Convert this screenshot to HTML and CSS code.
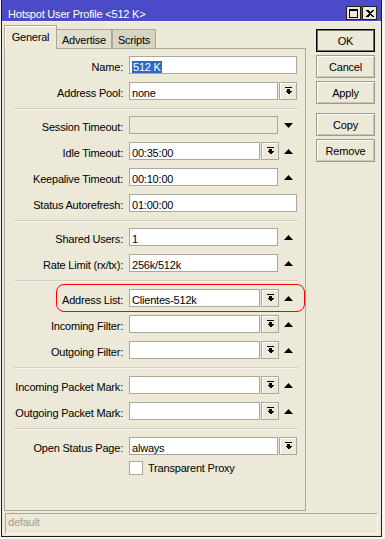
FILE: index.html
```html
<!DOCTYPE html>
<html lang="en">
<head>
    <meta charset="UTF-8">
    <meta name="viewport" content="width=device-width, initial-scale=1.0">
    <title>Hotspot User Profile</title>
    <link rel="stylesheet" href="styles.css">
</head>
<body>
    <div class="window">
        <div class="titlebar">
            <div class="title">Hotspot User Profile &lt;512 K&gt;</div>
            <div class="tbtns">
                <div class="tbtn">
                    <svg width="9" height="9" viewBox="0 0 9 9" shape-rendering="crispEdges"><path d="M0 0h9v2H0zM0 2h1v7H0zM8 2h1v7H8zM0 8h9v1H0z" fill="#000"/></svg>
                </div>
                <div class="tbtn">
                    <svg width="8" height="7" viewBox="0 0 8 7" shape-rendering="crispEdges"><path d="M0 0h2l2 2 2-2h2L5 3.5 8 7H6L4 5 2 7H0l3-3.5z" fill="#000"/></svg>
                </div>
            </div>
        </div>

        <div class="main">
            <div class="left">
                <div class="tabs">
                    <div class="tab on" style="width: 53px;">General</div>
                    <div class="tab" style="width: 55px; border-left: none;">Advertise</div>
                    <div class="tab dark" style="width: 44px;">Scripts</div>
                </div>

                <div class="panel">
                    <div class="row">
                        <div class="label">Name:</div>
                        <div class="field"><div class="edit"><span class="sel">512 K</span></div></div>
                    </div>
                    <div class="row">
                        <div class="label">Address Pool:</div>
                        <div class="field">
                            <div class="edit">none</div>
                            <div class="drop"><svg width="7" height="8" viewBox="0 0 7 8" shape-rendering="crispEdges"><path d="M0 0h7v1H0zM2 2h3v2H2zM0 4h7L3.5 7.5z" fill="#000"/></svg></div>
                        </div>
                    </div>

                    <div class="sep"></div>

                    <div class="row">
                        <div class="label">Session Timeout:</div>
                        <div class="field">
                            <div class="edit off"></div>
                            <div class="arrow"><svg width="9" height="5" viewBox="0 0 9 5"><path d="M0 0h9L4.5 5z" fill="#000"/></svg></div>
                        </div>
                    </div>
                    <div class="row">
                        <div class="label">Idle Timeout:</div>
                        <div class="field">
                            <div class="edit">00:35:00</div>
                            <div class="drop"><svg width="7" height="8" viewBox="0 0 7 8" shape-rendering="crispEdges"><path d="M0 0h7v1H0zM2 2h3v2H2zM0 4h7L3.5 7.5z" fill="#000"/></svg></div>
                            <div class="arrow"><svg width="9" height="5" viewBox="0 0 9 5"><path d="M0 5h9L4.5 0z" fill="#000"/></svg></div>
                        </div>
                    </div>
                    <div class="row">
                        <div class="label">Keepalive Timeout:</div>
                        <div class="field">
                            <div class="edit">00:10:00</div>
                            <div class="arrow"><svg width="9" height="5" viewBox="0 0 9 5"><path d="M0 5h9L4.5 0z" fill="#000"/></svg></div>
                        </div>
                    </div>
                    <div class="row">
                        <div class="label">Status Autorefresh:</div>
                        <div class="field"><div class="edit">01:00:00</div></div>
                    </div>

                    <div class="sep"></div>

                    <div class="row">
                        <div class="label">Shared Users:</div>
                        <div class="field">
                            <div class="edit">1</div>
                            <div class="arrow"><svg width="9" height="5" viewBox="0 0 9 5"><path d="M0 5h9L4.5 0z" fill="#000"/></svg></div>
                        </div>
                    </div>
                    <div class="row">
                        <div class="label">Rate Limit (rx/tx):</div>
                        <div class="field">
                            <div class="edit">256k/512k</div>
                            <div class="arrow"><svg width="9" height="5" viewBox="0 0 9 5"><path d="M0 5h9L4.5 0z" fill="#000"/></svg></div>
                        </div>
                    </div>

                    <div class="sep wide"></div>

                    <div class="row marked">
                        <div class="mark"></div>
                        <div class="label">Address List:</div>
                        <div class="field">
                            <div class="edit">Clientes-512k</div>
                            <div class="drop"><svg width="7" height="8" viewBox="0 0 7 8" shape-rendering="crispEdges"><path d="M0 0h7v1H0zM2 2h3v2H2zM0 4h7L3.5 7.5z" fill="#000"/></svg></div>
                            <div class="arrow"><svg width="9" height="5" viewBox="0 0 9 5"><path d="M0 5h9L4.5 0z" fill="#000"/></svg></div>
                        </div>
                    </div>
                    <div class="row">
                        <div class="label">Incoming Filter:</div>
                        <div class="field">
                            <div class="edit"></div>
                            <div class="drop"><svg width="7" height="8" viewBox="0 0 7 8" shape-rendering="crispEdges"><path d="M0 0h7v1H0zM2 2h3v2H2zM0 4h7L3.5 7.5z" fill="#000"/></svg></div>
                            <div class="arrow"><svg width="9" height="5" viewBox="0 0 9 5"><path d="M0 5h9L4.5 0z" fill="#000"/></svg></div>
                        </div>
                    </div>
                    <div class="row">
                        <div class="label">Outgoing Filter:</div>
                        <div class="field">
                            <div class="edit"></div>
                            <div class="drop"><svg width="7" height="8" viewBox="0 0 7 8" shape-rendering="crispEdges"><path d="M0 0h7v1H0zM2 2h3v2H2zM0 4h7L3.5 7.5z" fill="#000"/></svg></div>
                            <div class="arrow"><svg width="9" height="5" viewBox="0 0 9 5"><path d="M0 5h9L4.5 0z" fill="#000"/></svg></div>
                        </div>
                    </div>

                    <div class="sep wide"></div>

                    <div class="row">
                        <div class="label">Incoming Packet Mark:</div>
                        <div class="field">
                            <div class="edit"></div>
                            <div class="drop"><svg width="7" height="8" viewBox="0 0 7 8" shape-rendering="crispEdges"><path d="M0 0h7v1H0zM2 2h3v2H2zM0 4h7L3.5 7.5z" fill="#000"/></svg></div>
                            <div class="arrow"><svg width="9" height="5" viewBox="0 0 9 5"><path d="M0 5h9L4.5 0z" fill="#000"/></svg></div>
                        </div>
                    </div>
                    <div class="row">
                        <div class="label">Outgoing Packet Mark:</div>
                        <div class="field">
                            <div class="edit"></div>
                            <div class="drop"><svg width="7" height="8" viewBox="0 0 7 8" shape-rendering="crispEdges"><path d="M0 0h7v1H0zM2 2h3v2H2zM0 4h7L3.5 7.5z" fill="#000"/></svg></div>
                            <div class="arrow"><svg width="9" height="5" viewBox="0 0 9 5"><path d="M0 5h9L4.5 0z" fill="#000"/></svg></div>
                        </div>
                    </div>

                    <div class="sep wide"></div>

                    <div class="row">
                        <div class="label">Open Status Page:</div>
                        <div class="field">
                            <div class="edit">always</div>
                            <div class="drop"><svg width="7" height="8" viewBox="0 0 7 8" shape-rendering="crispEdges"><path d="M0 0h7v1H0zM2 2h3v2H2zM0 4h7L3.5 7.5z" fill="#000"/></svg></div>
                        </div>
                    </div>
                    <div class="check">
                        <div class="box"></div>
                        <span>Transparent Proxy</span>
                    </div>
                </div>
            </div>

            <div class="right">
                <div class="btn default">OK</div>
                <div class="btn">Cancel</div>
                <div class="btn">Apply</div>
                <div class="btn gap">Copy</div>
                <div class="btn">Remove</div>
            </div>
        </div>

        <div class="status">default</div>
    </div>
</body>
</html>
```

FILE: styles.css
```css
body {
    margin: 0;
    background-color: #f6f5f0;
    font-family: "Liberation Sans", Arial, sans-serif;
    font-size: 11px;
    letter-spacing: -0.2px;
    color: #000;
}

.window {
    width: 381px;
    height: 537px;
    margin-left: 1px;
    box-sizing: border-box;
    border: 1px solid #1e1e1e;
    border-top: none;
    background-color: #ece9d8;
}

.titlebar {
    height: 21px;
    background-color: #4b4bc9;
    border-bottom: 1px solid #f4f3ee;
    color: #fff;
    display: flex;
    justify-content: space-between;
    padding: 6px 4px 0 6px;
    box-sizing: content-box;
    height: 15px;
}

.title {
    line-height: 14px;
    margin-top: 1px;
    white-space: nowrap;
}

.tbtns {
    display: flex;
    gap: 1px;
}

.tbtn {
    width: 15px;
    height: 14px;
    box-sizing: border-box;
    border: 1px solid #222;
    background-color: #ece9d8;
    display: flex;
    align-items: center;
    justify-content: center;
}

.main {
    display: flex;
    padding: 3px 0 0 2px;
}

.left {
    width: 302px;
}

.tabs {
    display: flex;
    align-items: flex-end;
    height: 23px;
}

.tab {
    height: 19px;
    box-sizing: border-box;
    border: 1px solid #aca899;
    border-bottom: none;
    padding-top: 3px;
    line-height: 14px;
    text-align: center;
    background-color: #e2dfce;
}

.tab.dark {
    background-color: #d7d4c4;
}

.tab.on {
    height: 24px;
    margin-bottom: -1px;
    padding-top: 4px;
    position: relative;
    background-color: #ece9d8;
    box-shadow: inset 1px 1px #fff;
}

.panel {
    height: 463px;
    box-sizing: border-box;
    border: 1px solid #aca899;
    padding-top: 7px;
}

.row {
    display: flex;
    height: 18px;
    margin-bottom: 8px;
}

.label {
    width: 120px;
    box-sizing: border-box;
    padding: 4px 2px 0 0;
    line-height: 14px;
    text-align: right;
    white-space: nowrap;
}

.field {
    display: flex;
    width: 168px;
    margin-left: 4px;
}

.edit {
    flex: 1;
    height: 18px;
    box-sizing: border-box;
    border: 1px solid #aca899;
    background-color: #fff;
    padding: 3px 2px 0;
    line-height: 14px;
    white-space: nowrap;
    overflow: hidden;
}

.edit.off {
    background-color: #ece9d8;
}

.sel {
    background-color: #316ac5;
    color: #fff;
    padding: 0 1px;
}

.drop {
    width: 18px;
    height: 18px;
    margin-left: 1px;
    box-sizing: border-box;
    border: 1px solid #aca899;
    background-color: #ece9d8;
    box-shadow: inset 1px 1px #fff;
    display: flex;
    align-items: center;
    justify-content: center;
}

.arrow {
    width: 18px;
    margin-left: 1px;
    padding-left: 5px;
    box-sizing: border-box;
    display: flex;
    align-items: center;
}

.drop + .arrow {
    margin-left: 0;
}

.sep {
    width: 284px;
    margin: 1px 0 6px 9px;
    border-top: 1px solid #d0cdbc;
    border-bottom: 1px solid #f7f6f0;
}

.sep.wide {
    margin-bottom: 7px;
}

.marked {
    position: relative;
}

.mark {
    position: absolute;
    left: 51px;
    right: 0;
    top: -5px;
    bottom: -5px;
    border: 1px solid #f00;
    border-radius: 8px;
    pointer-events: none;
}

.check {
    display: flex;
    align-items: center;
    gap: 5px;
    height: 16px;
    margin: -3px 0 0 124px;
}

.box {
    width: 14px;
    height: 14px;
    box-sizing: border-box;
    border: 1px solid #aca899;
    background-color: #fff;
}

.right {
    display: flex;
    flex-direction: column;
    gap: 3px;
    margin-left: 10px;
    padding-top: 4px;
}

.btn {
    width: 59px;
    height: 23px;
    box-sizing: border-box;
    border: 1px solid #9d9a8c;
    box-shadow: inset 1px 1px #fff, inset -1px -1px #cbc8b8;
    display: flex;
    align-items: center;
    justify-content: center;
    padding-top: 1px;
}

.btn.default {
    border-color: #000;
    box-shadow: inset 0 0 0 1px #716f64;
}

.btn.gap {
    margin-top: 6px;
}

.status {
    width: 373px;
    height: 21px;
    margin: 2px 0 0 3px;
    box-sizing: border-box;
    border: 1px solid #aca899;
    border-right-color: #fbfaf6;
    border-bottom-color: #fbfaf6;
    padding: 1px 0 0 2px;
    line-height: 14px;
    color: #a3a092;
}
```
